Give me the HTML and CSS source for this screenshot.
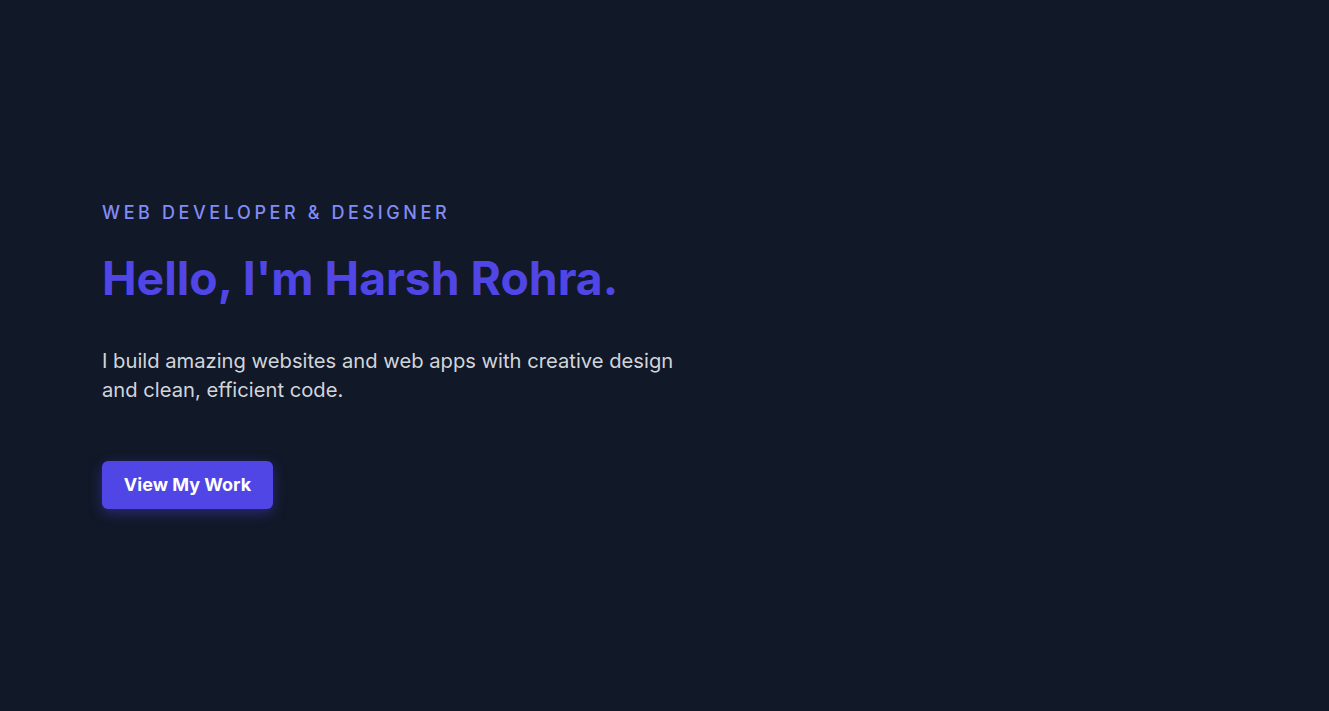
FILE: index.html
```html
<!DOCTYPE html>
<html lang="en">
<head>
<meta charset="utf-8">
<title>Harsh Rohra</title>
<link rel="stylesheet" href="styles.css">
</head>
<body>
<main class="hero">
  <div class="hero-content">
    <p class="eyebrow">Web Developer &amp; Designer</p>
    <h1 class="title">Hello, I'm Harsh Rohra.</h1>
    <p class="lead">I build amazing websites and web apps with creative design and clean, efficient code.</p>
    <a class="btn" href="#work">View My Work</a>
  </div>
</main>
</body>
</html>
```

FILE: styles.css
```css
* { box-sizing: border-box; }
html, body {
  margin: 0;
  padding: 0;
  background: #111827;
}
body {
  font-family: "Inter", "Noto Sans", sans-serif;
  color: #d1d5db;
}
.hero {
  height: 711px;
  display: flex;
  align-items: center;
  padding-left: 102px;
  padding-bottom: 4px;
}
.hero-content {
  display: flex;
  flex-direction: column;
  align-items: flex-start;
}
.eyebrow {
  margin: 0;
  font-size: 18px;
  line-height: 28px;
  font-weight: 500;
  letter-spacing: 3.6px;
  text-transform: uppercase;
  color: #818cf8;
}
.title {
  margin: 21px 0 0;
  font-size: 46.3px;
  line-height: 60px;
  font-weight: 700;
  color: #4f46e5;
}
.lead {
  margin: 38px 0 0;
  max-width: 590px;
  font-size: 20.2px;
  line-height: 29px;
  font-weight: 400;
  color: #d1d5db;
}
.btn {
  margin-top: 57px;
  display: inline-flex;
  align-items: center;
  justify-content: center;
  width: 171px;
  height: 48px;
  border-radius: 6px;
  background: #4f46e5;
  color: #ffffff;
  font-size: 18px;
  font-weight: 700;
  text-decoration: none;
  box-shadow: 0 4px 14px rgba(79, 70, 229, 0.4);
}
```
